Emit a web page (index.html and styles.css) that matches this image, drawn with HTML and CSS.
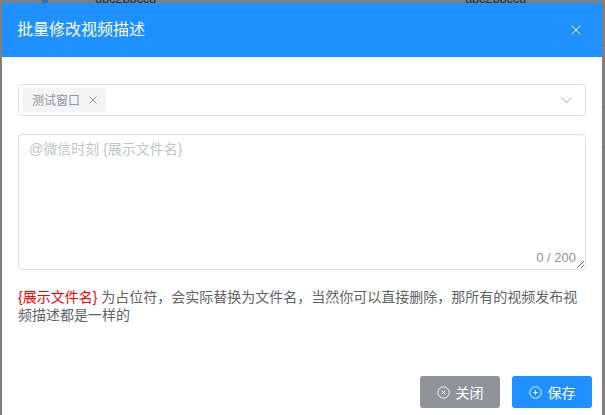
FILE: index.html
```html
<!DOCTYPE html>
<html lang="zh-CN">
<head>
<meta charset="utf-8">
<title>批量修改视频描述</title>
<link rel="stylesheet" href="styles.css">
</head>
<body>
<div class="backdrop" aria-hidden="true">
  <span class="bg-mark"></span>
  <span class="bg-text bg-a">ubc2bbccu</span>
  <span class="bg-text bg-b">ubc2bbccu</span>
  <span class="bg-line bg-l1"></span>
  <span class="bg-line bg-l2"></span>
  <span class="bg-line bg-l3"></span>
</div>
<section class="dialog">
  <header class="dialog-header">
    <h2 class="dialog-title">批量修改视频描述</h2>
    <svg class="close" width="10" height="10" viewBox="0 0 10 10"><path d="M.5.5l9 9M9.500.5l-9 9" stroke="#fff" stroke-width="1" fill="none"/></svg>
  </header>
  <div class="dialog-body">
    <div class="select">
      <span class="tag"><span class="tag-label">测试窗口</span>
        <svg class="tag-x" width="8" height="8" viewBox="0 0 8 8"><path d="M.5.500l7 7M7.500.500l-7 7" stroke="#909399" stroke-width="1" fill="none"/></svg>
      </span>
      <svg class="chevron" width="11" height="6" viewBox="0 0 11 6"><path d="M.4.400l5.100 5.100L10.600.400" stroke="#c0c4cc" stroke-width="1.100" fill="none"/></svg>
    </div>
    <div class="textarea-wrap">
      <textarea class="textarea" placeholder="@微信时刻 {展示文件名}"></textarea>
      <span class="count">0 / 200</span>
    </div>
    <p class="tip"><span class="tip-red">{展示文件名}</span> 为占位符，会实际替换为文件名，当然你可以直接删除，那所有的视频发布视频描述都是一样的</p>
  </div>
  <footer class="dialog-footer">
    <button class="btn btn-gray" type="button">
      <svg width="13" height="13" viewBox="0 0 13 13"><circle cx="6.500" cy="6.500" r="5.700" stroke="#fff" stroke-width=".9" fill="none"/><path d="M4.800 4.800l3.400 3.400M8.200 4.800l-3.400 3.400" stroke="#fff" stroke-width=".9" fill="none"/></svg>
      关闭
    </button>
    <button class="btn btn-blue" type="button">
      <svg width="13" height="13" viewBox="0 0 13 13"><circle cx="6.500" cy="6.500" r="5.700" stroke="#fff" stroke-width=".9" fill="none"/><path d="M4 6.500h5M6.500 4v5" stroke="#fff" stroke-width=".9" fill="none"/></svg>
      保存
    </button>
  </footer>
</section>
</body>
</html>
```
FILE: styles.css
```css
* { box-sizing: border-box; }
html, body { margin: 0; height: 100%; }
body {
  background: #808080;
  font-family: "Liberation Sans", "Noto Sans CJK SC", sans-serif;
  overflow: hidden;
  position: relative;
}
.backdrop { position: absolute; inset: 0; overflow: hidden; }
.bg-text {
  position: absolute;
  top: -9px;
  font-size: 13px;
  line-height: 16px;
  letter-spacing: -.2px;
  color: #2a2a2a;
}
.bg-a { left: 95px; }
.bg-b { left: 465px; }
.bg-mark { position: absolute; left: 42px; top: 0; width: 6px; height: 3px; background: #3a6ea8; }
.bg-line { position: absolute; left: 602px; width: 3px; height: 1px; background: #707070; }
.bg-l1 { top: 45px; }
.bg-l2 { top: 106px; }
.bg-l3 { top: 147px; }
.dialog {
  position: absolute;
  left: 2px;
  top: 3px;
  width: 600px;
  height: 412px;
  background: #fff;
  display: flex;
  flex-direction: column;
}
.dialog-header {
  height: 54px;
  flex: none;
  background: #1e90ff;
  padding: 0 21px 0 15px;
  display: flex;
  align-items: center;
  justify-content: space-between;
}
.dialog-title {
  margin: 0;
  font-size: 16px;
  font-weight: 400;
  line-height: 24px;
  color: #fff;
}
.close { display: block; }
.dialog-body {
  flex: 1;
  padding: 27px 16px 0;
  display: flex;
  flex-direction: column;
}
.select {
  height: 32px;
  border: 1px solid #dcdfe6;
  border-radius: 4px;
  padding: 0 13px 0 3px;
  display: flex;
  align-items: center;
  justify-content: space-between;
}
.tag {
  height: 24px;
  width: 84px;
  background: #f4f4f5;
  border-radius: 4px;
  padding-left: 10px;
  font-size: 12px;
  color: #909399;
  display: flex;
  align-items: center;
  gap: 9px;
}
.tag-label { margin-bottom: 2px; }
.tag-x { display: block; }
.chevron { display: block; }
.textarea-wrap {
  position: relative;
  margin-top: 18px;
  height: 136px;
}
.textarea {
  display: block;
  width: 100%;
  height: 100%;
  border: 1px solid #dcdfe6;
  border-radius: 4px;
  padding: 4px 10px;
  font: 14px/21px "Liberation Sans", "Noto Sans CJK SC", sans-serif;
  color: #606266;
  outline: none;
}
.textarea::placeholder { color: #c0c4cc; opacity: 1; }
.count {
  position: absolute;
  right: 10px;
  bottom: 4px;
  font-size: 13px;
  line-height: 16px;
  color: #909399;
}
.tip {
  margin: 18px 0 0;
  font-size: 14px;
  line-height: 18px;
  color: #606266;
}
.tip-red { color: #f00; }
.dialog-footer {
  flex: none;
  padding: 0 10px 7px 0;
  display: flex;
  justify-content: flex-end;
  gap: 12px;
}
.btn {
  width: 80px;
  height: 32px;
  border: 0;
  border-radius: 3px;
  color: #fff;
  font: 400 14px "Liberation Sans", "Noto Sans CJK SC", sans-serif;
  display: flex;
  align-items: center;
  justify-content: center;
  gap: 6px;
  padding: 0;
}
.btn-gray { background: #909399; }
.btn-blue { background: #1e90ff; }
```
